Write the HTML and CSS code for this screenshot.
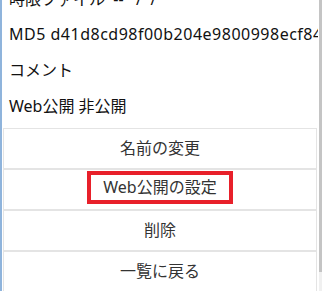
FILE: index.html
```html
<!DOCTYPE html>
<html lang="ja">
<head>
    <meta charset="UTF-8">
    <meta name="viewport" content="width=device-width, initial-scale=1.0">
    <title>ファイル詳細</title>
    <link rel="stylesheet" href="styles.css">
</head>
<body>
<div class="frame">
    <div class="page">
        <div class="info">
            <p class="row">時限ファイル&nbsp; --&nbsp; &nbsp;/&nbsp; /</p>
            <p class="row hash">MD5 d41d8cd98f00b204e9800998ecf8427e</p>
            <p class="row">コメント</p>
            <p class="row">Web公開 非公開</p>
        </div>

        <div class="menu">
            <a class="menu-item" href="#"><span class="label">名前の変更</span></a>
            <a class="menu-item" href="#"><span class="label marked">Web公開の設定</span></a>
            <a class="menu-item" href="#"><span class="label">削除</span></a>
            <a class="menu-item" href="#"><span class="label">一覧に戻る</span></a>
        </div>
    </div>

    <div class="scrollbar">
        <div class="thumb"></div>
    </div>
</div>
</body>
</html>
```

FILE: styles.css
```css
body {
    font-family: "Noto Sans", "Noto Sans CJK JP", sans-serif;
    font-size: 16px;
    margin: 0;
    padding: 0;
    background: #fff;
    color: #111;
    overflow: hidden;
}
.frame {
    display: flex;
    height: 291px;
    border-left: 2px solid #8fb4dc;
}
.page {
    flex: 1;
    min-width: 0;
    overflow: hidden;
    padding: 0 1px;
}
.info {
    margin-top: -18px;
    padding-left: 6px;
}
.row {
    margin: 0;
    height: 35px;
    line-height: 35px;
    white-space: nowrap;
}
.row:nth-child(n+3) {
    margin-top: 1px;
}
.hash {
    letter-spacing: 0.5px;
}
.menu {
    margin-top: 4px;
}
.menu-item {
    display: flex;
    align-items: center;
    justify-content: center;
    height: 39px;
    border: 1px solid #e4e4e4;
    color: #333;
    text-decoration: none;
}
.label {
    margin-bottom: 3px;
}
.marked {
    display: inline-block;
    margin-bottom: 5px;
    border: 4px solid #e8202a;
    padding: 4px 12px;
    line-height: 17px;
}
.scrollbar {
    width: 3px;
    margin-left: 1px;
    background: #f0f0f0;
}
.thumb {
    height: 272px;
    background: #c4c4c4;
}
```
